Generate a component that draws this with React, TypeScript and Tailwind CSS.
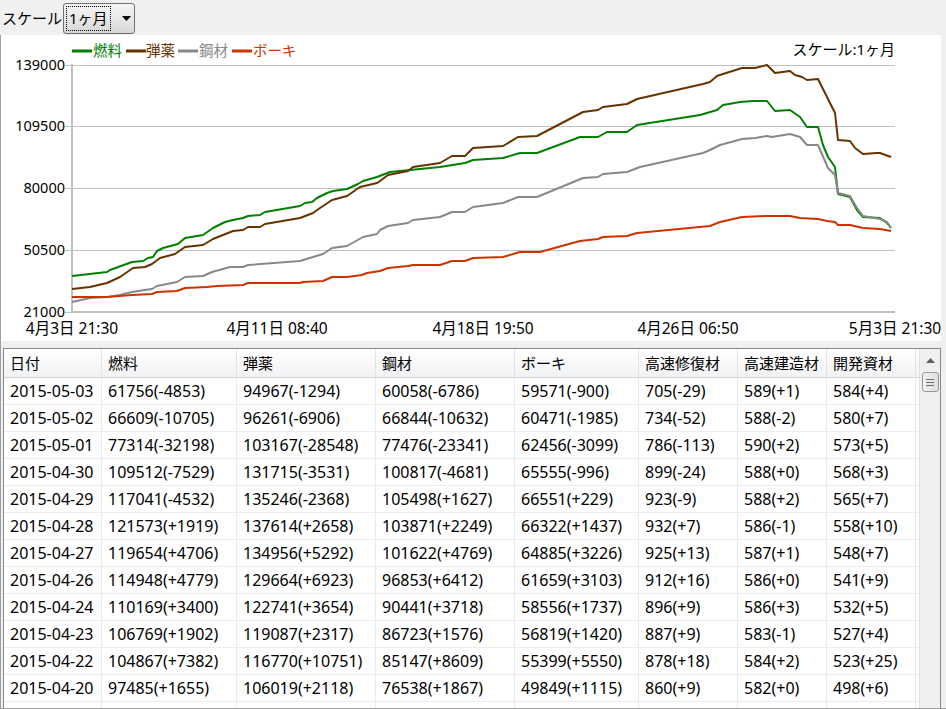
import React from 'react';

type Series = { name: string; color: string; pts: string };

const series: Series[] = [
  {
    name: '燃料',
    color: '#008000',
    pts: '72,276 107,272 110,270 132,262 143,261 148,258 153,257 157,251 163,248 178,244 185,238 203,235 213,228 225,222 233,220 243,218 248,216 260,215 265,212 300,206 305,203 312,202 317,198 327,193 333,191 347,189 358,184 363,181 377,177 390,172 410,170 440,167 465,163 473,160 503,158 520,153 537,153 580,137 598,137 607,132 627,132 637,125 700,115 717,110 723,105 740,102 753,101 767,101 775,111 790,110 800,117 807,127 818,127 823,145 828,157 835,167 838,194 850,197 857,210 863,217 880,218 887,223 891,228',
  },
  {
    name: '弾薬',
    color: '#663300',
    pts: '72,289 90,287 107,283 120,277 133,268 145,267 152,264 160,258 175,254 185,247 203,245 213,239 233,231 243,230 248,227 260,227 265,224 300,218 313,213 320,208 332,200 347,196 360,187 377,183 380,181 388,175 408,171 413,167 440,163 452,156 465,156 473,148 503,146 518,137 537,136 583,112 598,110 603,107 627,104 637,99 703,84 710,82 717,76 723,74 742,68 755,68 767,65 775,73 790,71 795,75 802,77 807,80 818,79 825,93 835,113 838,140 850,141 855,148 863,154 877,153 880,153 891,157',
  },
  {
    name: '鋼材',
    color: '#888888',
    pts: '72,302 90,298 107,297 120,295 132,292 145,290 152,289 157,286 177,282 185,277 203,276 212,272 230,267 243,267 248,265 300,261 313,257 323,254 332,248 347,246 363,237 377,234 380,230 388,226 408,223 413,220 440,217 452,212 465,212 473,207 503,203 518,197 537,197 583,178 598,177 603,174 627,172 640,167 703,153 710,150 720,145 742,139 755,138 767,136 772,137 790,134 800,137 807,145 818,145 828,168 835,175 838,193 850,196 857,208 863,216 880,219 887,222 891,228',
  },
  {
    name: 'ボーキ',
    color: '#cc3300',
    pts: '72,297 90,297 107,297 132,295 152,294 157,292 177,291 185,288 207,287 217,286 243,285 248,283 300,283 303,282 323,281 332,277 347,277 362,275 367,273 380,271 388,268 408,266 413,265 440,265 452,261 465,261 473,258 503,257 520,252 540,252 580,241 598,239 603,237 627,236 637,233 710,226 720,222 742,217 767,216 790,216 800,218 818,219 827,221 835,222 838,225 850,225 863,228 880,229 891,231',
  },
];

const legend = [
  { name: '燃料', color: '#008000', x: 72, tx: 93 },
  { name: '弾薬', color: '#663300', x: 126, tx: 146 },
  { name: '鋼材', color: '#888888', x: 178, tx: 199 },
  { name: 'ボーキ', color: '#cc3300', x: 232, tx: 253 },
];

const yTicks = [
  { label: '139000', y: 65 },
  { label: '109500', y: 126 },
  { label: '80000', y: 188 },
  { label: '50500', y: 250 },
  { label: '21000', y: 312 },
];

const xTicks = [
  { label: '4月3日 21:30', x: 72 },
  { label: '4月11日 08:40', x: 277 },
  { label: '4月18日 19:50', x: 483 },
  { label: '4月26日 06:50', x: 688 },
  { label: '5月3日 21:30', x: 895 },
];

const headers = ['日付', '燃料', '弾薬', '鋼材', 'ボーキ', '高速修復材', '高速建造材', '開発資材'];

const rows: string[][] = [
  ['2015-05-03', '61756(-4853)', '94967(-1294)', '60058(-6786)', '59571(-900)', '705(-29)', '589(+1)', '584(+4)'],
  ['2015-05-02', '66609(-10705)', '96261(-6906)', '66844(-10632)', '60471(-1985)', '734(-52)', '588(-2)', '580(+7)'],
  ['2015-05-01', '77314(-32198)', '103167(-28548)', '77476(-23341)', '62456(-3099)', '786(-113)', '590(+2)', '573(+5)'],
  ['2015-04-30', '109512(-7529)', '131715(-3531)', '100817(-4681)', '65555(-996)', '899(-24)', '588(+0)', '568(+3)'],
  ['2015-04-29', '117041(-4532)', '135246(-2368)', '105498(+1627)', '66551(+229)', '923(-9)', '588(+2)', '565(+7)'],
  ['2015-04-28', '121573(+1919)', '137614(+2658)', '103871(+2249)', '66322(+1437)', '932(+7)', '586(-1)', '558(+10)'],
  ['2015-04-27', '119654(+4706)', '134956(+5292)', '101622(+4769)', '64885(+3226)', '925(+13)', '587(+1)', '548(+7)'],
  ['2015-04-26', '114948(+4779)', '129664(+6923)', '96853(+6412)', '61659(+3103)', '912(+16)', '586(+0)', '541(+9)'],
  ['2015-04-24', '110169(+3400)', '122741(+3654)', '90441(+3718)', '58556(+1737)', '896(+9)', '586(+3)', '532(+5)'],
  ['2015-04-23', '106769(+1902)', '119087(+2317)', '86723(+1576)', '56819(+1420)', '887(+9)', '583(-1)', '527(+4)'],
  ['2015-04-22', '104867(+7382)', '116770(+10751)', '85147(+8609)', '55399(+5550)', '878(+18)', '584(+2)', '523(+25)'],
  ['2015-04-20', '97485(+1655)', '106019(+2118)', '76538(+1867)', '49849(+1115)', '860(+9)', '582(+0)', '498(+6)'],
  ['', '', '', '', '', '', '', ''],
];

const cols = 'grid grid-cols-[98px_135px_139px_139px_124px_99px_89px_89px]';

function Chart() {
  return (
    <svg width={940} height={306} viewBox="1 35 940 306" className="block">
      {legend.map((l) => (
        <g key={l.name}>
          <line x1={l.x} x2={l.x + 20} y1={51} y2={51} stroke={l.color} strokeWidth={3} />
          <text x={l.tx} y={56} fontSize={14.5} fill={l.color}>
            {l.name}
          </text>
        </g>
      ))}
      <text x={895} y={55} fontSize={15} textAnchor="end" fill="#000">
        スケール:1ヶ月
      </text>
      {yTicks.slice(0, 4).map((t) => (
        <line key={t.y} x1={72} x2={895} y1={t.y + 0.5} y2={t.y + 0.5} stroke="#c0c0c0" strokeWidth={1} />
      ))}
      {yTicks.map((t) => (
        <g key={t.label}>
          <line x1={65} x2={72} y1={t.y + 0.5} y2={t.y + 0.5} stroke="#c0c0c0" strokeWidth={1} />
          <text x={65} y={t.y + 5} fontSize={14.5} textAnchor="end" fill="#000">
            {t.label}
          </text>
        </g>
      ))}
      <line x1={72} x2={72} y1={64} y2={313} stroke="#c0c0c0" strokeWidth={2} />
      <line x1={71} x2={895} y1={312} y2={312} stroke="#c0c0c0" strokeWidth={2} />
      {series.map((s) => (
        <polyline
          key={s.name}
          points={s.pts}
          fill="none"
          stroke={s.color}
          strokeWidth={2}
          strokeLinejoin="round"
        />
      ))}
      {xTicks.map((t) => (
        <text key={t.label} x={t.x} y={334} fontSize={15.5} textAnchor="middle" fill="#000">
          {t.label}
        </text>
      ))}
    </svg>
  );
}

function ScrollBar() {
  return (
    <div className="flex w-[21px] flex-col items-center border-l border-[#e0e0e0] bg-[#f0f0f0]">
      <div className="flex h-[23px] w-full items-center justify-center">
        <svg width={9} height={5} viewBox="0 0 9 5">
          <polygon points="0,5 9,5 4.5,0" fill="#606060" />
        </svg>
      </div>
      <div className="flex h-[20px] w-[17px] flex-col items-center justify-center gap-[2px] rounded-[3px] border border-[#979797] bg-gradient-to-r from-[#f2f2f2] to-[#dedede]">
        <div className="h-px w-[8px] bg-[#707070]" />
        <div className="h-px w-[8px] bg-[#707070]" />
        <div className="h-px w-[8px] bg-[#707070]" />
      </div>
      <div className="flex-1" />
      <div className="flex h-[22px] w-full items-center justify-center">
        <svg width={9} height={5} viewBox="0 0 9 5">
          <polygon points="0,0 9,0 4.5,5" fill="#606060" />
        </svg>
      </div>
    </div>
  );
}

export default function App() {
  return (
    <div className="relative h-[709px] w-[946px] overflow-hidden bg-[#f0f0f0] font-['Noto_Sans','Noto_Sans_CJK_JP',sans-serif] text-black">
      <div className="flex h-[35px] items-start pl-[2px] pt-[3px]">
        <span className="mt-[4px] w-[61px] text-[15px] leading-[22px]">スケール</span>
        <div className="flex h-[31px] w-[72px] items-center rounded-[3px] border border-[#707070] bg-gradient-to-b from-[#f4f4f4] via-[#e8e8e8] to-[#d6d6d6] pl-[2px]">
          <div className="flex h-[25px] w-[45px] items-center border border-dotted border-black pl-[2px] text-[15px] leading-none">
            1ヶ月
          </div>
          <svg width={9} height={5} viewBox="0 0 9 5" className="ml-[11px]">
            <polygon points="0,0 9,0 4.5,5" fill="#000" />
          </svg>
        </div>
      </div>

      <div className="h-[306px] w-[941px] border-l border-[#a0a0a0] bg-white">
        <Chart />
      </div>

      <div className="ml-[3px] mt-[7px] flex h-[400px] w-[938px] border border-[#828790] bg-white">
        <div className="flex-1 overflow-hidden">
          <div className={`${cols} h-[29px] border-b border-[#d5d5d5] bg-gradient-to-b from-white to-[#f1f2f4]`}>
            {headers.map((h) => (
              <div
                key={h}
                className="flex items-center border-r border-[#e3e3e3] pl-[6px] text-[15px] leading-none"
              >
                {h}
              </div>
            ))}
          </div>
          {rows.map((r, i) => (
            <div key={i} className={`${cols} h-[27px] border-b border-[#ededed]`}>
              {r.map((c, j) => (
                <div
                  key={j}
                  className="flex items-center border-r border-[#e6ecf4] pl-[6px] text-[16px] leading-none"
                >
                  {c}
                </div>
              ))}
            </div>
          ))}
        </div>
        <ScrollBar />
      </div>
      <div className="absolute left-0 top-[341px] h-[368px] w-px bg-[#a0a0a0]" />
      <div className="absolute bottom-0 left-0 h-px w-[946px] bg-[#a0a0a0]" />
    </div>
  );
}
